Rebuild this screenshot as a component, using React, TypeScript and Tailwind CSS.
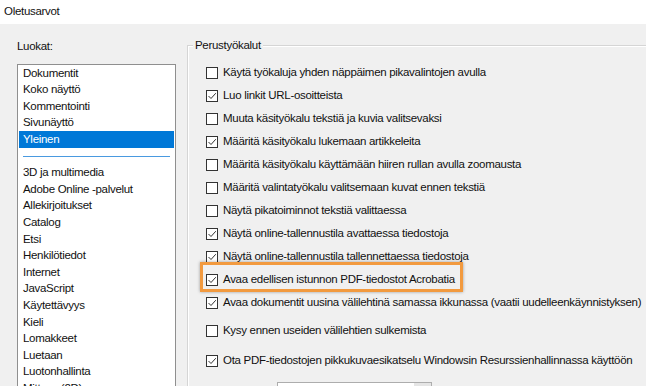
import { Fragment } from 'react';

const CATEGORIES_TOP = ['Dokumentit', 'Koko näyttö', 'Kommentointi', 'Sivunäyttö'];
const CATEGORIES_BOTTOM = [
  '3D ja multimedia',
  'Adobe Online -palvelut',
  'Allekirjoitukset',
  'Catalog',
  'Etsi',
  'Henkilötiedot',
  'Internet',
  'JavaScript',
  'Käytettävyys',
  'Kieli',
  'Lomakkeet',
  'Luetaan',
  'Luotonhallinta',
  'Mittaus (2D)',
];

type Option = { label: string; checked: boolean; space?: string };

const OPTIONS: Option[] = [
  { label: 'Käytä työkaluja yhden näppäimen pikavalintojen avulla', checked: false },
  { label: 'Luo linkit URL-osoitteista', checked: true },
  { label: 'Muuta käsityökalu tekstiä ja kuvia valitsevaksi', checked: false },
  { label: 'Määritä käsityökalu lukemaan artikkeleita', checked: true },
  { label: 'Määritä käsityökalu käyttämään hiiren rullan avulla zoomausta', checked: false },
  { label: 'Määritä valintatyökalu valitsemaan kuvat ennen tekstiä', checked: false },
  { label: 'Näytä pikatoiminnot tekstiä valittaessa', checked: false },
  { label: 'Näytä online-tallennustila avattaessa tiedostoja', checked: true },
  { label: 'Näytä online-tallennustila tallennettaessa tiedostoja', checked: true },
  { label: 'Avaa edellisen istunnon PDF-tiedostot Acrobatia', checked: true },
  { label: 'Avaa dokumentit uusina välilehtinä samassa ikkunassa (vaatii uudelleenkäynnistyksen)', checked: true },
  { label: 'Kysy ennen useiden välilehtien sulkemista', checked: false, space: 'mt-[5px]' },
  { label: 'Ota PDF-tiedostojen pikkukuvaesikatselu Windowsin Resurssienhallinnassa käyttöön', checked: true, space: 'mt-[7px]' },
];

function CheckBox({ checked }: { checked: boolean }) {
  return (
    <span className="flex h-3 w-3 shrink-0 items-center justify-center border border-[#333333] bg-white">
      {checked && (
        <svg width="10" height="10" viewBox="0 0 10 10" fill="none">
          <path d="M1.5 5 L4 7.5 L8.8 2.2" stroke="#333333" strokeWidth="1" />
        </svg>
      )}
    </span>
  );
}

export default function App() {
  return (
    <div
      className="relative h-[386px] w-[646px] overflow-hidden bg-[#f0f0f0] text-[11.5px] tracking-[-0.3px] text-[#111111]"
      style={{ fontFamily: '"Liberation Sans", Arial, sans-serif' }}
    >
      <div className="flex h-6 items-center bg-white pl-1">Oletusarvot</div>

      <div className="flex">
        <div className="w-[176px] shrink-0 pl-[17px]">
          <div className="flex h-10 items-center pt-[6px]">Luokat:</div>
          <div className="border border-[#8f8f8f] bg-white px-[1px]">
            {CATEGORIES_TOP.map((c) => (
              <div key={c} className="flex h-[16.6px] items-center pl-1">
                {c}
              </div>
            ))}
            <div className="flex h-[16.6px] items-center bg-[#0078d7] pl-1 text-white">Yleinen</div>
            <div className="flex h-[16.6px] items-center px-1">
              <div className="h-px w-full bg-[#4a9ae0]" />
            </div>
            {CATEGORIES_BOTTOM.map((c) => (
              <Fragment key={c}>
                <div className="flex h-[16.6px] items-center pl-1">{c}</div>
              </Fragment>
            ))}
          </div>
        </div>

        <div className="relative ml-[11px] mt-[21px] flex-1 border-l border-t border-[#d5d5d5] pl-[18px] pt-[15px] shadow-[inset_1px_1px_0_#ffffff]">
          <span className="absolute -top-[9px] left-[5px] bg-[#f0f0f0] px-[2px] leading-4">Perustyökalut</span>
          {OPTIONS.map((o) => (
            <div key={o.label} className={`flex h-[23px] items-center gap-[5px] whitespace-nowrap ${o.space ?? ''}`}>
              <CheckBox checked={o.checked} />
              <span>{o.label}</span>
            </div>
          ))}
          <div className="mt-[10px] flex items-center gap-[10px] whitespace-nowrap">
            <span>Kosketustila:</span>
            <div className="flex h-[22px] w-[155px] items-center border border-[#adadad] bg-white">
              <span className="flex-1 pl-1">Automaattinen tunnistus</span>
              <span className="h-full w-[17px] bg-[#e5e5e5]" />
            </div>
          </div>
        </div>
      </div>

      <div className="absolute left-[200px] top-[262px] h-[30px] w-[263px] border-[3px] border-[#f29a3f] shadow-[0_0_3px_rgba(0,0,0,0.35)]" />
    </div>
  );
}
